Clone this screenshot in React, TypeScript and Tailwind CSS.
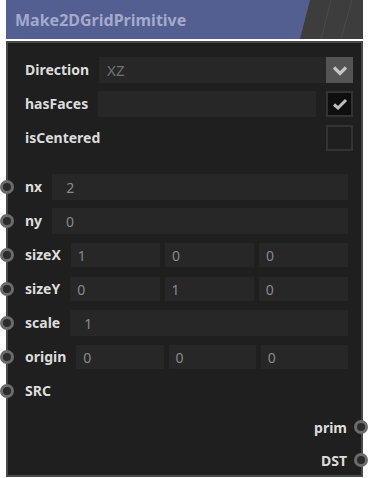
import React from "react";

function Port({ side }: { side: "left" | "right" }) {
  const pos = side === "left" ? "left-[-25px]" : "right-[-15px]";
  return (
    <span
      className={`absolute top-1/2 -translate-y-1/2 w-[14px] h-[14px] rounded-full border-[3px] border-[#6b6b6b] bg-[#2b2b2b] ${pos}`}
    />
  );
}

function Field({ value, wide }: { value: string; wide?: boolean }) {
  return (
    <div
      className={`flex-1 flex items-center bg-[#272727] text-[14px] text-[#8a8a8a] ${
        wide ? "h-[26px] pl-[14px]" : "h-[24px] pl-[7px]"
      }`}
    >
      {value}
    </div>
  );
}

function Row({
  label,
  port,
  children,
}: {
  label: string;
  port?: boolean;
  children?: React.ReactNode;
}) {
  return (
    <div className="relative flex items-center h-[26px] gap-[10px]">
      {port && <Port side="left" />}
      <span className="font-bold text-[14px] text-[#dcdcdc] leading-none">{label}</span>
      {children}
    </div>
  );
}

function Checkbox({ checked }: { checked?: boolean }) {
  return (
    <div
      className={`w-[27px] h-[26px] shrink-0 border-2 border-[#333333] flex items-center justify-center ${
        checked ? "bg-[#0e0e0e]" : "bg-[#1f1f1f]"
      }`}
    >
      {checked && (
        <svg width="16" height="12" viewBox="0 0 16 12">
          <polyline points="2,6.5 6,10 14,2" fill="none" stroke="#bdbdbd" strokeWidth="3" />
        </svg>
      )}
    </div>
  );
}

export default function App() {
  return (
    <div className="min-h-screen bg-white font-['Noto_Sans',sans-serif]">
      <div className="ml-[6px] w-[357px]">
        {/* title bar */}
        <div className="relative h-[39px] bg-[#3d3d3d] overflow-hidden">
          <div className="absolute inset-0 bg-[#535f90] [clip-path:polygon(0_0,304px_0,294px_100%,0_100%)]" />
          <svg className="absolute inset-0" width="357" height="39">
            <line x1="325" y1="0" x2="315" y2="39" stroke="#4b4b4b" strokeWidth="1" />
            <line x1="346" y1="0" x2="335" y2="39" stroke="#4b4b4b" strokeWidth="1" />
          </svg>
          <div className="relative h-full flex items-center pl-[9px] font-bold text-[16px] text-[#a4aacd]">
            Make2DGridPrimitive
          </div>
        </div>

        {/* body */}
        <div className="mt-[2px] h-[436px] border-2 border-[#494949] bg-[#1f1f1f] pl-[17px] pr-[8px] pt-[14px]">
          <div className="flex flex-col gap-[8px]">
            <Row label="Direction">
              <div className="flex-1 flex h-[26px] bg-[#272727]">
                <span className="flex-1 flex items-center pl-[8px] text-[15px] text-[#727272]">XZ</span>
                <div className="w-[27px] h-full bg-[#545454] flex items-center justify-center">
                  <svg width="16" height="11" viewBox="0 0 16 11">
                    <polyline points="2,2.5 8,8.5 14,2.5" fill="none" stroke="#c6c6c6" strokeWidth="3.2" />
                  </svg>
                </div>
              </div>
            </Row>
            <Row label="hasFaces">
              <div className="flex-1 h-[26px] bg-[#272727]" />
              <Checkbox checked />
            </Row>
            <Row label="isCentered">
              <div className="flex-1" />
              <Checkbox />
            </Row>
          </div>

          <div className="mt-[23px] mr-[5px] flex flex-col gap-[8px]">
            <Row label="nx" port>
              <Field value="2" wide />
            </Row>
            <Row label="ny" port>
              <Field value="0" wide />
            </Row>
            <Row label="sizeX" port>
              <div className="flex-1 flex gap-[5px]">
                <Field value="1" />
                <Field value="0" />
                <Field value="0" />
              </div>
            </Row>
            <Row label="sizeY" port>
              <div className="flex-1 flex gap-[5px]">
                <Field value="0" />
                <Field value="1" />
                <Field value="0" />
              </div>
            </Row>
            <Row label="scale" port>
              <Field value="1" wide />
            </Row>
            <Row label="origin" port>
              <div className="flex-1 flex gap-[5px]">
                <Field value="0" />
                <Field value="0" />
                <Field value="0" />
              </div>
            </Row>
            <Row label="SRC" port />
          </div>

          <div className="mt-[10px] flex flex-col gap-[7px]">
            <div className="relative h-[26px] flex items-center justify-end pr-[6px]">
              <span className="font-bold text-[14px] text-[#dcdcdc]">prim</span>
              <Port side="right" />
            </div>
            <div className="relative h-[26px] flex items-center justify-end pr-[6px]">
              <span className="font-bold text-[14px] text-[#dcdcdc]">DST</span>
              <Port side="right" />
            </div>
          </div>
        </div>
      </div>
    </div>
  );
}
